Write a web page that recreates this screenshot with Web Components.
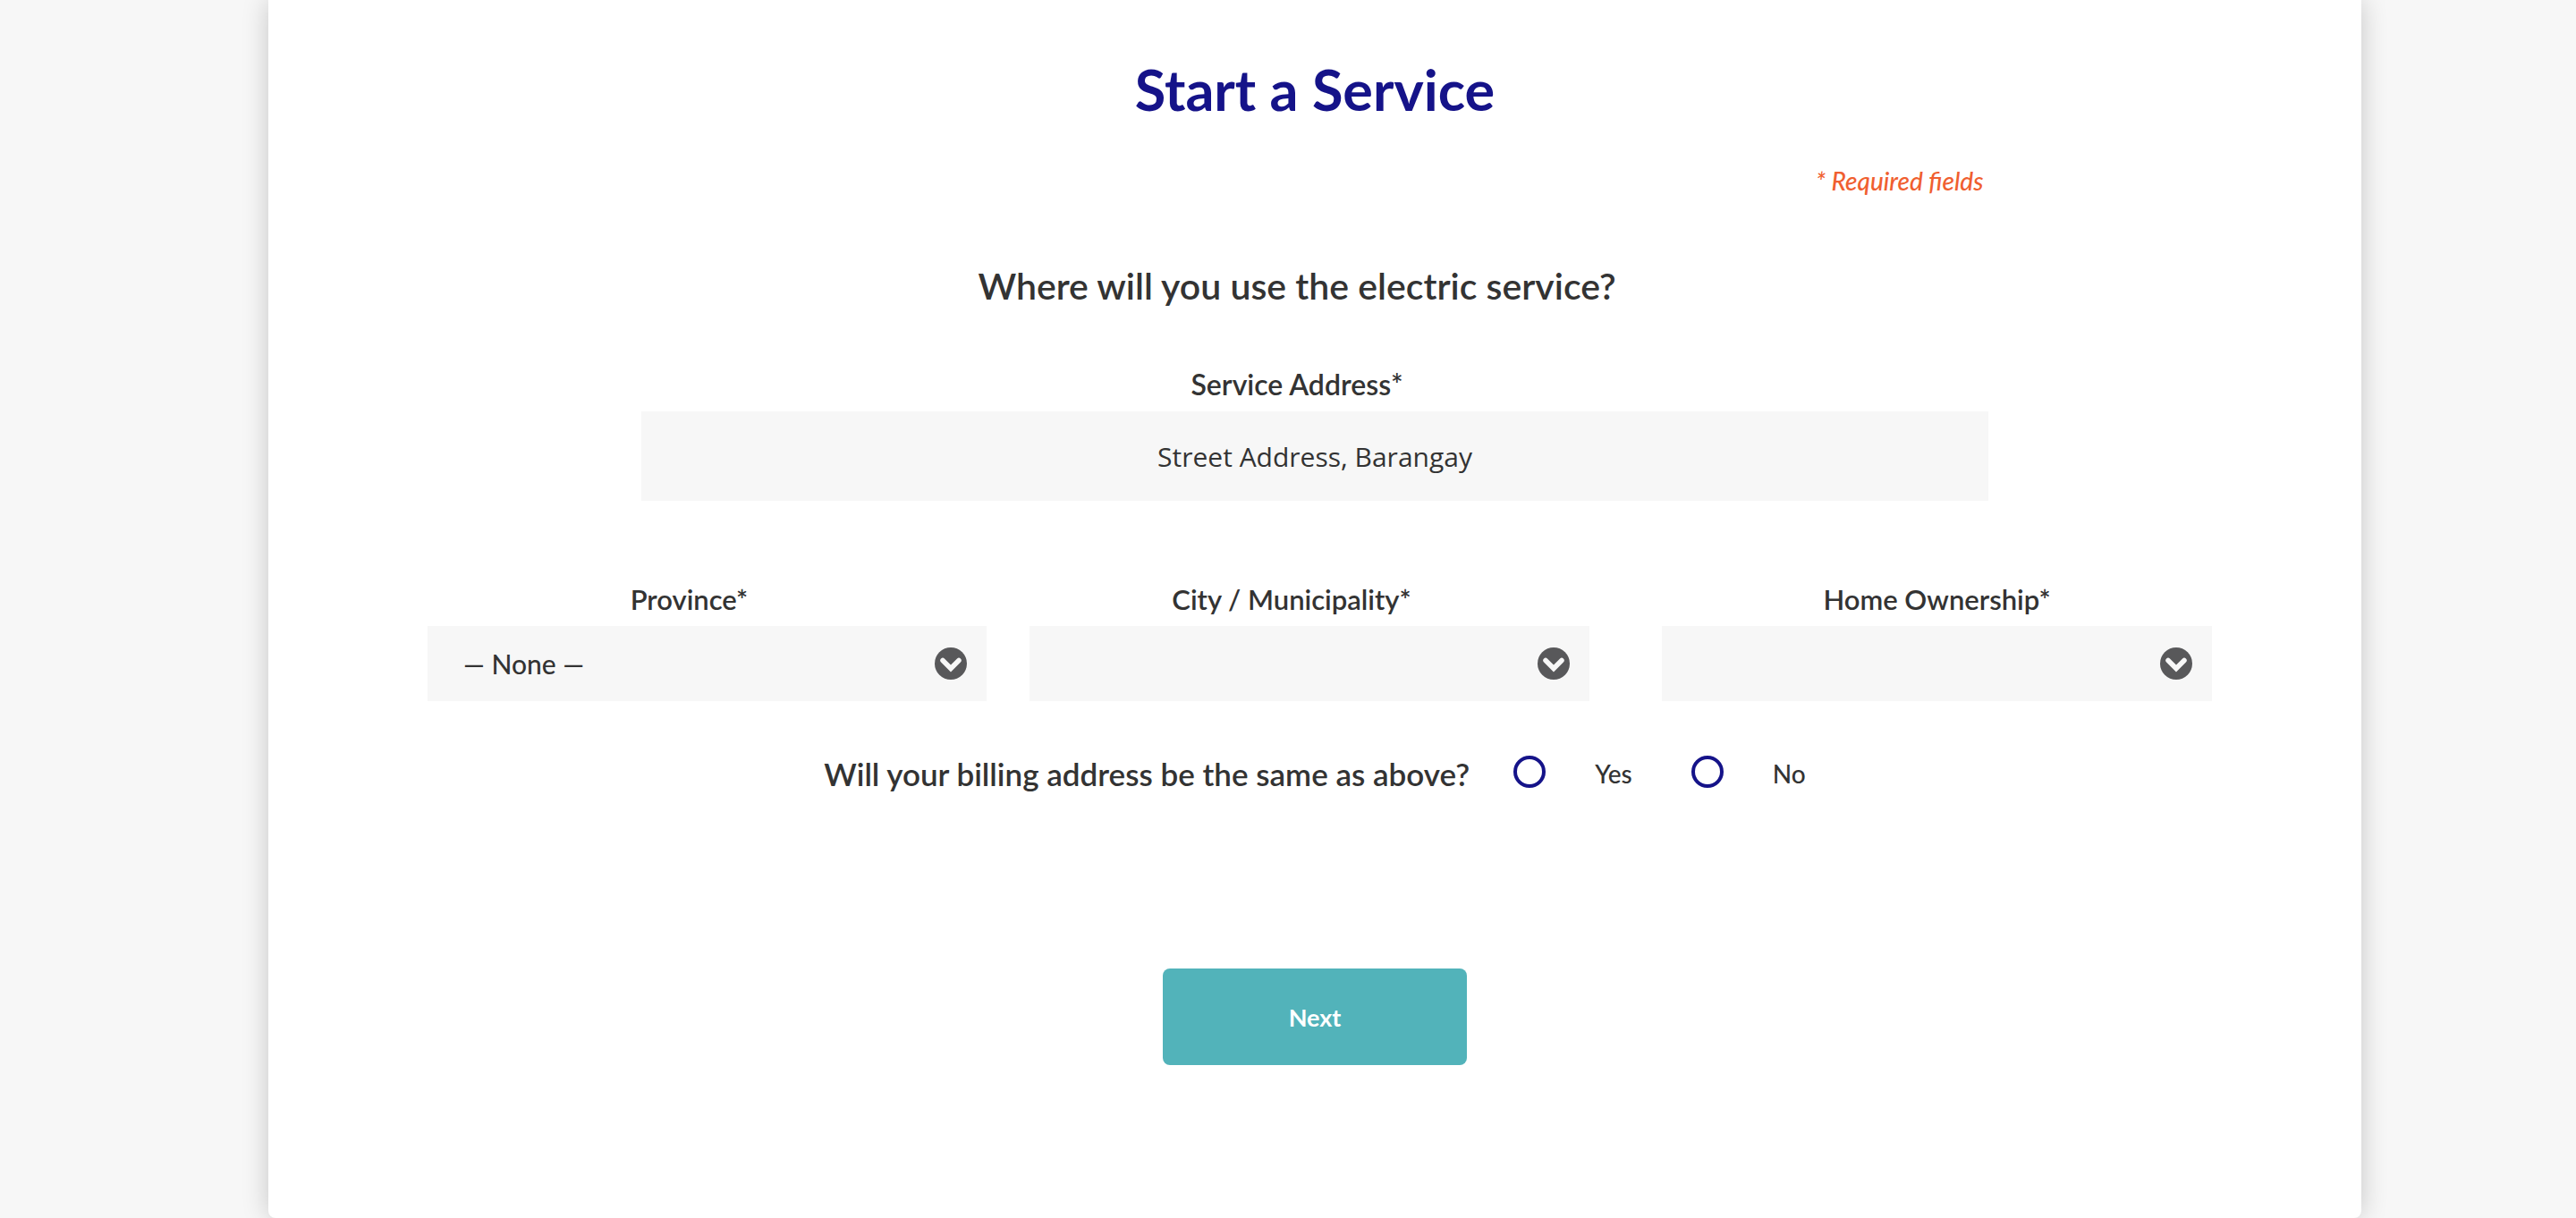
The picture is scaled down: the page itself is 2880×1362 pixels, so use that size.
<!DOCTYPE html>
<html lang="en">
<head>
<meta charset="utf-8">
<meta name="viewport" content="width=device-width, initial-scale=1">
<title>Start a Service</title>
<style>
html, body { margin: 0; background: #f7f7f7; }
body {
  --ink: #333333;
  --navy: #151389;
  --field: #f7f7f7;
  --accent: #52b3ba;
  --alert: #f05f30;
  color: var(--ink);
  font-family: Lato, "Liberation Sans", sans-serif;
  overflow: hidden;
}
</style>
</head>
<body>
<service-form></service-form>

<template id="form-card">
  <style>
    :host { display: block; box-sizing: border-box; min-height: 100vh; margin: 0 240px 0 300px; padding: 60px 0 0; background: #fff; border-radius: 0 0 8px 8px; box-shadow: 0 0 30px rgba(0, 0, 0, .2); }
  </style>
  <slot></slot>
</template>

<template id="text-field">
  <style>
    :host { display: flex; flex-direction: column; }
    label { padding-right: 40px; font-size: 32px; font-weight: 600; line-height: 40px; text-align: center; }
    input { box-sizing: border-box; width: 100%; height: 100px; margin: 10px 0 0; padding: 0 40px; border: 0; border-radius: 0; background: var(--field); color: var(--ink); font: 400 30px "Open Sans", sans-serif; text-align: center; }
    input::placeholder { color: var(--ink); opacity: 1; }
  </style>
  <label for="control"></label>
  <input id="control" type="text" required>
</template>

<template id="select-field">
  <style>
    :host { display: flex; flex-direction: column; }
    label { padding-right: 40px; font-size: 31px; font-weight: 600; line-height: 40px; text-align: center; }
    :host([centered]) label { padding-right: 0; }
    .box { display: grid; align-items: center; margin-top: 10px; }
    select, svg { grid-area: 1 / 1; }
    select { appearance: none; box-sizing: border-box; width: 100%; height: 84px; margin: 0; padding: 0 80px 0 40px; border: 0; border-radius: 0; background: var(--field); color: var(--ink); font: 500 30px Lato, sans-serif; }
    svg { justify-self: end; width: 36px; height: 36px; margin-right: 22px; pointer-events: none; }
  </style>
  <label for="control"></label>
  <div class="box">
    <select id="control"></select>
    <svg viewBox="0 0 36 36" aria-hidden="true">
      <circle cx="18" cy="18" r="18" fill="#58585a"/>
      <path d="M9 14.5 L18 23.5 L27 14.5" fill="none" stroke="#f7f7f7" stroke-width="5.5" stroke-linecap="round"/>
    </svg>
  </div>
</template>

<template id="radio-option">
  <style>
    :host { display: block; }
    label { display: flex; align-items: center; gap: 55px; font-size: 28px; font-weight: 500; line-height: 40px; }
    input { appearance: none; box-sizing: border-box; width: 36px; height: 36px; margin: 0 0 4px; border: 4px solid var(--navy); border-radius: 50%; background: #fff; }
    input:checked { background: radial-gradient(var(--navy) 45%, #fff 50%); }
  </style>
  <label><input type="radio"><slot></slot></label>
</template>

<template id="primary-button">
  <style>
    :host { display: block; }
    button { width: 340px; height: 108px; margin: 0; padding: 0; border: 0; border-radius: 8px; background: var(--accent); color: #fff; font: 700 27px Lato, sans-serif; cursor: pointer; }
  </style>
  <button type="submit"><slot></slot></button>
</template>

<template id="service-form">
  <style>
    :host { display: block; }
    form { display: flex; flex-direction: column; }
    h1, h2, p { margin: 0; text-align: center; }
    h1 { color: var(--navy); font-size: 63px; font-weight: 700; line-height: 80px; }
    .address { width: 64.4%; margin: 0 auto; }
    .required { margin-top: 42px; padding-right: 6px; color: var(--alert); font-size: 28px; font-style: italic; font-weight: 500; line-height: 40px; text-align: right; }
    h2 { margin: 70px 0 62px; padding-right: 40px; font-size: 41px; font-weight: 600; line-height: 56px; }
    .row { display: grid; grid-template-columns: 625fr 626fr 648fr; column-gap: 48px; margin-top: 90px; padding: 0 167px 0 178px; }
    .row select-field:last-child { margin-left: 33px; }
    .billing { display: flex; justify-content: center; align-items: center; margin-top: 57px; }
    .billing p { margin-right: 49px; font-size: 35px; font-weight: 600; line-height: 48px; }
    .billing radio-option + radio-option { margin-left: 66px; }
    .actions { display: flex; justify-content: center; margin: 194px 0 80px; }
  </style>
  <form-card>
    <form>
      <h1>Start a Service</h1>
      <div class="address">
        <p class="required">* Required fields</p>
        <h2>Where will you use the electric service?</h2>
        <text-field label="Service Address*" placeholder="Street Address, Barangay"></text-field>
      </div>
      <div class="row">
        <select-field label="Province*" options="— None —"></select-field>
        <select-field label="City / Municipality*"></select-field>
        <select-field label="Home Ownership*" centered></select-field>
      </div>
      <div class="billing" role="radiogroup" aria-labelledby="billing-question">
        <p id="billing-question">Will your billing address be the same as above?</p>
        <radio-option>Yes</radio-option>
        <radio-option>No</radio-option>
      </div>
      <div class="actions"><primary-button>Next</primary-button></div>
    </form>
  </form-card>
</template>

<script>
class TemplateElement extends HTMLElement {
  constructor() {
    super();
    const template = document.getElementById(this.localName);
    this.attachShadow({ mode: 'open' }).append(template.content.cloneNode(true));
  }
}

class FormCard extends TemplateElement {}

class TextField extends TemplateElement {
  connectedCallback() {
    this.shadowRoot.querySelector('label').textContent = this.getAttribute('label');
    this.shadowRoot.querySelector('input').placeholder = this.getAttribute('placeholder');
  }
}

class SelectField extends TemplateElement {
  connectedCallback() {
    this.shadowRoot.querySelector('label').textContent = this.getAttribute('label');
    const options = (this.getAttribute('options') || '').split('|').map(text => new Option(text));
    this.shadowRoot.querySelector('select').replaceChildren(...options);
  }
}

class RadioOption extends TemplateElement {
  connectedCallback() {
    const input = this.shadowRoot.querySelector('input');
    input.addEventListener('change', () => {
      for (const other of this.parentElement.querySelectorAll('radio-option')) {
        if (other !== this) other.shadowRoot.querySelector('input').checked = false;
      }
    });
  }
}

class PrimaryButton extends TemplateElement {}
class ServiceForm extends TemplateElement {}

customElements.define('form-card', FormCard);
customElements.define('text-field', TextField);
customElements.define('select-field', SelectField);
customElements.define('radio-option', RadioOption);
customElements.define('primary-button', PrimaryButton);
customElements.define('service-form', ServiceForm);
</script>
</body>
</html>
